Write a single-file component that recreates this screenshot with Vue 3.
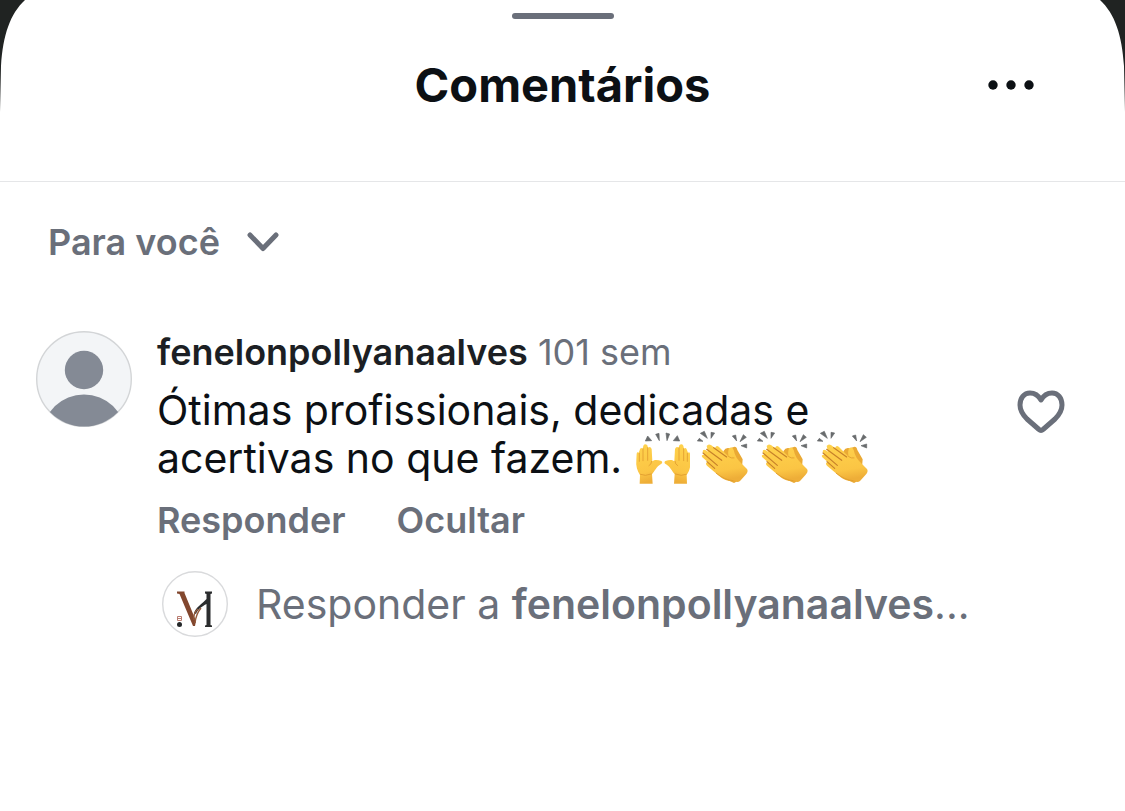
<script setup>
import { ref } from 'vue'

const order = ref('voce')
const reply = ref('')
const liked = ref(false)
const claps = [1, 2, 3]
</script>

<template>
  <main class="sheet">
    <svg class="corner left" viewBox="0 0 26 112" aria-hidden="true"><path d="M0 0H25C10 14 3 35 1 66L0 112Z" /></svg>
    <svg class="corner right" viewBox="0 0 26 112" aria-hidden="true"><path d="M26 0H1C16 14 23 35 25 66L26 112Z" /></svg>

    <header class="header">
      <div class="grabber"></div>
      <div class="title-row">
        <h1>Comentários</h1>
        <button class="more" aria-label="Mais opções">
          <svg viewBox="0 0 48 12"><circle cx="6" cy="6" r="4.7" /><circle cx="24" cy="6" r="4.7" /><circle cx="42" cy="6" r="4.7" /></svg>
        </button>
      </div>
    </header>

    <div class="sort">
      <select v-model="order" aria-label="Ordenar comentários">
        <option value="voce">Para você</option>
      </select>
      <svg viewBox="0 0 32 20" aria-hidden="true"><path d="M3 3L16 16.500L29 3" /></svg>
    </div>

    <article class="comment">
      <svg class="avatar" viewBox="0 0 96 96" aria-hidden="true">
        <defs><clipPath id="face"><circle cx="48" cy="48" r="47.500" /></clipPath></defs>
        <circle cx="48" cy="48" r="47.300" fill="#f3f5f7" stroke="#d3d5d7" stroke-width="1.400" />
        <circle cx="48" cy="39" r="19.200" fill="#848a95" />
        <ellipse cx="48" cy="103" rx="41" ry="39.500" fill="#848a95" clip-path="url(#face)" />
      </svg>

      <div class="body">
        <div class="meta"><strong>fenelonpollyanaalves</strong> <time>101 sem</time></div>
        <p>
          Ótimas profissionais, dedicadas e acertivas no que fazem.
          <span class="emojis">
            <svg viewBox="26 30 168 168" role="img" aria-label="Mãos levantadas">
              <defs>
                <linearGradient id="skin" x1="0" y1="0" x2="0.200" y2="1"><stop offset="0" stop-color="#ffd34d" /><stop offset="0.750" stop-color="#fbc544" /><stop offset="1" stop-color="#eeae38" /></linearGradient>
                <g id="palm">
                  <path fill="url(#skin)" d="M43 191L44 165C36 153 31 138 33 120L34 101Q35 95 40 98L44 88Q47 81 52 86L54 77Q59 69 66 76L68 83Q75 77 79 87L81 124C89 117 98 120 108 123Q114 128 106 133C94 139 88 154 80 163L82 191Z" />
                  <path fill="none" stroke="#dc962c" stroke-width="2.200" stroke-linecap="round" d="M42 100V124M53 86V122M67 83V121M79 124Q79 133 71 137M45 163Q59 170 78 162" />
                </g>
              </defs>
              <use href="#palm" />
              <use href="#palm" transform="translate(228 0) scale(-1 1)" />
              <path fill="#686b6d" stroke="#686b6d" stroke-width="2" stroke-linejoin="round" d="M67 48L79 62L60 63ZM91 43L101 40L102 62ZM122 39L133 42L125 62ZM156 47L163 63L144 62Z" />
            </svg>
            <svg v-for="n in claps" :key="n" viewBox="206 30 168 168" role="img" aria-label="Aplauso">
              <path fill="#eaa934" d="M294 94Q302 80 313 85L323 82Q333 77 336 90L352 118L347 178L326 189L308 181Z" />
              <path fill="url(#skin)" d="M321 184C299 183 285 172 271 159L245 137Q238 129 247 126L231 112Q226 103 237 104L232 96Q232 86 242 91L248 95L244 78Q249 70 258 76L269 84Q273 74 281 81L310 110Q306 94 312 84Q321 80 325 90C328 106 336 120 350 132L365 147Q370 155 361 164L344 183Q335 190 326 181Z" />
              <path fill="none" stroke="#c7812a" stroke-width="3.500" stroke-linecap="round" d="M233 99L276 136M244 88L289 121M265 83L304 111M245 125L268 145" />
              <path fill="none" stroke="#df9b2b" stroke-width="2.500" stroke-linecap="round" d="M310 110Q318 116 326 114M273 160Q300 181 323 182" />
              <path fill="#686b6d" stroke="#686b6d" stroke-width="2" stroke-linejoin="round" d="M216 63L222 55L233 64ZM225 40L237 34L246 55ZM257 37L268 39L257 55ZM321 48L331 45L334 63ZM354 44L363 52L344 65ZM347 77L364 72V84Z" />
            </svg>
          </span>
        </p>
        <div class="actions">
          <button>Responder</button>
          <button>Ocultar</button>
        </div>
        <label class="reply">
          <svg class="brand" viewBox="0 0 66 66" aria-hidden="true">
            <circle cx="33" cy="33" r="32.300" fill="#fff" stroke="#d9dadc" stroke-width="1.400" />
            <path fill="#82472e" d="M15 20.500H22.500V22L34 50L33 55H31L17.500 23L15 22.500Z" />
            <path fill="#2b2d2e" d="M43 20.500H50V22.500L48.500 23V54L50 54.500V56H43V54.500L44.500 54V33C39 36 36 38 34 43L32 42C34 36 40 33 44.500 28V23L43 22.500Z" />
            <path fill="none" stroke="#945a3c" stroke-width="1.400" d="M32 49Q31 42 36 38M33 52Q34 43 39 37" />
            <path fill="none" stroke="#b87c70" stroke-width="1" d="M15.500 45.500H19.500V49.500H15.500ZM15.500 47.500H19.500" />
            <circle cx="17.500" cy="53.500" r="2.500" fill="#242729" />
          </svg>
          <span class="field">
            <span v-show="!reply" class="hint">Responder a <b>fenelonpollyanaalves</b>...</span>
            <input v-model="reply" type="text" aria-label="Responder a fenelonpollyanaalves" />
          </span>
        </label>
      </div>

      <button class="like" aria-label="Curtir" :aria-pressed="liked" @click="liked = !liked">
        <svg viewBox="0 0 48 44"><path d="M24 10C20 3 15 3 13 3C7 3 3 8 3 15C3 21 6 25 10 29L22 39.500Q24 41.500 26 39.500L38 29C42 25 45 21 45 15C45 8 41 3 35 3C33 3 28 3 24 10Z" /></svg>
      </button>
    </article>
  </main>
</template>

<style>
body {
  background: #fff;
}
</style>

<style scoped>
.sheet {
  position: relative;
  font-family: Inter, "Liberation Sans", sans-serif;
  color: #0c1014;
}

button,
select,
input {
  font: inherit;
  color: inherit;
  border: 0;
  padding: 0;
  margin: 0;
  background: none;
}

svg {
  display: block;
  flex: none;
}

.corner {
  position: absolute;
  top: 0;
  width: 26px;
  height: 112px;
  fill: #202322;
}

.left {
  left: 0;
}

.right {
  right: 0;
}

.header {
  padding: 13px 90px 66px;
  border-bottom: 1px solid #e5e6e8;
}

.grabber {
  width: 102px;
  height: 6px;
  margin: 0 auto 36px;
  border-radius: 3px;
  background: #6a6f7a;
}

.title-row {
  display: grid;
  grid-template-columns: 1fr auto 1fr;
  align-items: center;
}

h1 {
  grid-column: 2;
  margin: 0;
  font-size: 47px;
  line-height: 60px;
  font-weight: 700;
}

.more {
  justify-self: end;
}

.more svg {
  width: 48px;
  height: 12px;
  fill: #0c1014;
}

.sort {
  display: inline-grid;
  grid-template-columns: auto 32px;
  column-gap: 27px;
  align-items: center;
  padding: 36px 48px 0;
  color: #6a6f7a;
}

.sort select {
  appearance: none;
  font-size: 36px;
  line-height: 48px;
  font-weight: 600;
}

.sort path,
.like path {
  fill: none;
  stroke: #6a6f7a;
  stroke-width: 5;
  stroke-linecap: round;
  stroke-linejoin: round;
}

.comment {
  display: flex;
  align-items: flex-start;
  padding: 65px 60px 0 36px;
}

.avatar {
  width: 96px;
  height: 96px;
}

.body {
  flex: 1;
  min-width: 0;
  padding: 0 36px 0 25px;
}

.meta {
  font-size: 36px;
  line-height: 42px;
  color: #6a6f7a;
}

.meta strong {
  font-weight: 600;
  color: #1c1f24;
}

p {
  max-width: 800px;
  margin: 13px 0 0;
  font-size: 41px;
  line-height: 48px;
}

.emojis {
  display: inline-flex;
  gap: 4px;
  height: 48px;
  vertical-align: top;
}

.emojis svg {
  width: 56px;
  height: 56px;
  margin-top: -4px;
}

.actions {
  display: flex;
  gap: 51px;
  margin-top: 14px;
  font-size: 36px;
  line-height: 48px;
  font-weight: 600;
  color: #6a6f7a;
}

.reply {
  display: flex;
  align-items: center;
  gap: 28px;
  margin: 27px 0 0 5px;
}

.brand {
  width: 66px;
  height: 66px;
}

.field {
  display: grid;
  flex: 1;
  font-size: 41px;
  line-height: 48px;
  color: #6a6f7a;
}

.field > * {
  grid-area: 1 / 1;
  min-width: 0;
}

.field input {
  width: 100%;
  outline: 0;
}

.hint {
  white-space: nowrap;
}

.hint b {
  font-weight: 600;
}

.like {
  margin-top: 59px;
}

.like svg {
  width: 48px;
  height: 44px;
}
</style>
